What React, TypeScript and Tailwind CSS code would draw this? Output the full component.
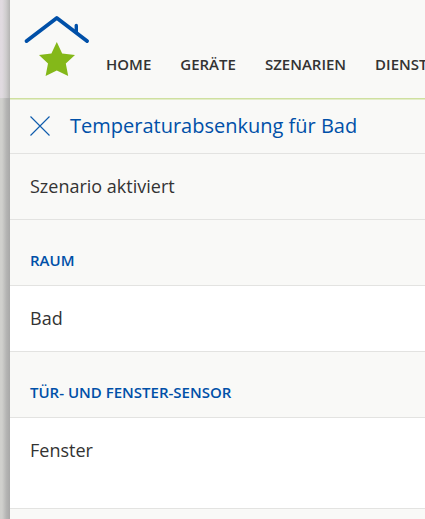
import React from 'react';

const navItems = ['Home', 'Geräte', 'Szenarien', 'Dienste'];

interface SectionProps {
  title: string;
  value: string;
  tall?: boolean;
}

// House roof with the green star below it
function Logo(): React.JSX.Element {
  return (
    <svg width="66" height="64" viewBox="0 0 66 64" aria-hidden="true">
      <path d="M2.6 27 L32.8 4 L63 27" fill="none" stroke="#0050a8" strokeWidth="3.8" strokeLinecap="round" strokeLinejoin="round" />
      <path d="M52.3 11.5 V18" fill="none" stroke="#0050a8" strokeWidth="3.4" strokeLinecap="round" />
      <path d="M32.8 28 L38.2 39.6 L51 41 L41.8 49.6 L44.2 62 L32.8 56.6 L21.6 62 L24 49.6 L15 41 L27.4 39.6 Z" fill="#84b819" />
    </svg>
  );
}

function Section({ title, value, tall = false }: SectionProps): React.JSX.Element {
  return (
    <section>
      <h2 className="border-b border-[#e3e3e1] px-5 pt-[30px] pb-[15px] text-[15px] leading-5 font-semibold text-[#0050a8] uppercase">
        {title}
      </h2>
      <p className={`border-b border-[#e3e3e1] bg-white px-5 pt-5 text-lg leading-[25px] ${tall ? 'pb-[45px]' : 'pb-5'}`}>
        {value}
      </p>
    </section>
  );
}

function App(): React.JSX.Element {
  return (
    <div className="flex min-h-screen overflow-x-hidden bg-[#f9f9f7] font-['Open_Sans','Noto_Sans',sans-serif] text-[#333333]">
      {/* Metallic edge next to the panel */}
      <div className="flex w-[10px] shrink-0 flex-col">
        <div className="h-[98px] bg-linear-to-r from-[#e0dae0] from-20% via-[#cfcdce] via-60% to-[#b4b4b3]" />
        <div className="flex-1 bg-linear-to-r from-[#d0d0cd] from-20% via-[#b4b4b3] via-65% to-[#a8a8a8]" />
      </div>

      <div className="min-w-0 flex-1">
        <header className="border-b border-[#cfe09f]">
          <div className="flex items-start border-[#f9f9f7] pl-[14px]">
            <a href="#home" aria-label="Home" className="mt-[14px] mb-5 shrink-0">
              <Logo />
            </a>
            <nav className="mt-[54px] ml-4 flex gap-[29px] text-[15px] leading-5 font-semibold">
              {navItems.map((item) => (
                <a key={item} href={`#${item.toLowerCase()}`} className="whitespace-nowrap uppercase">
                  {item}
                </a>
              ))}
            </nav>
          </div>
        </header>

        <main className="border-t border-[#e3edc9]">
          <div className="flex items-center gap-5 border-b border-[#e3e3e1] px-5 pt-3 pb-[13px] text-[#0050a8]">
            <button type="button" aria-label="Schließen" className="shrink-0">
              <svg width="20" height="20" viewBox="0 0 20 20" fill="none" stroke="#0f5cad" strokeWidth="1.1">
                <path d="M0.5 0.5 L19.5 19.5 M19.5 0.5 L0.5 19.5" />
              </svg>
            </button>
            <h1 className="text-xl leading-7 whitespace-nowrap">Temperaturabsenkung für Bad</h1>
          </div>

          <p className="border-b border-[#e3e3e1] px-5 py-5 text-lg leading-[25px]">Szenario aktiviert</p>

          <Section title="Raum" value="Bad" />
          <Section title="Tür- und Fenster-Sensor" value="Fenster" tall />
        </main>
      </div>
    </div>
  );
}

export default App;
